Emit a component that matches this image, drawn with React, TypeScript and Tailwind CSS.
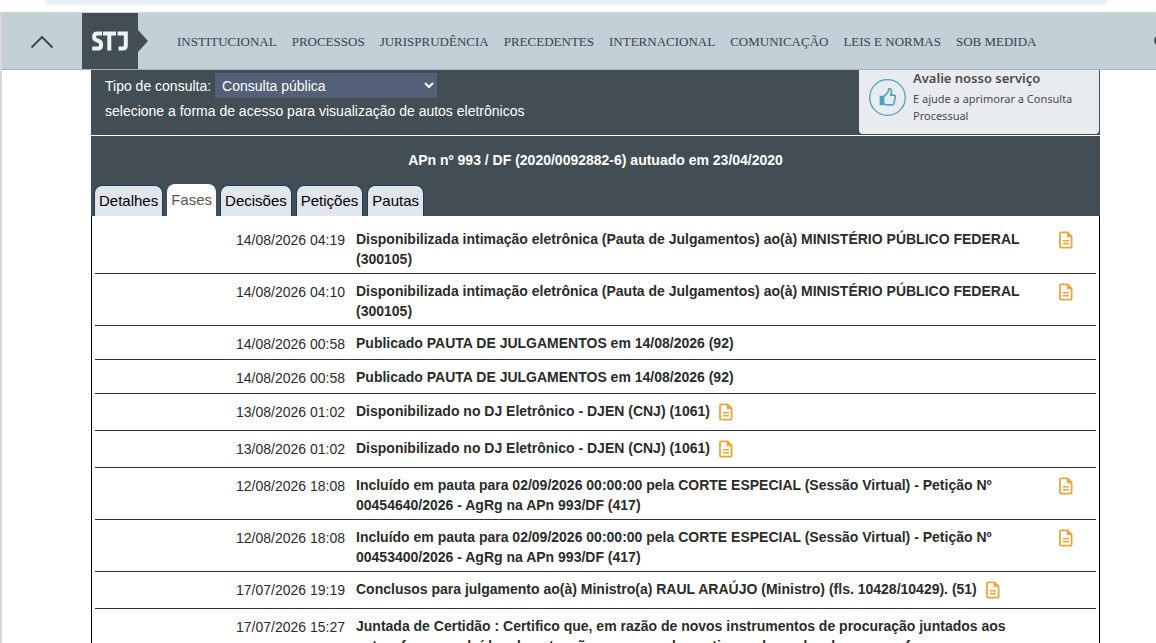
import React from "react";

type Phase = { date: string; text: string; doc?: boolean };

const menu = [
  "INSTITUCIONAL",
  "PROCESSOS",
  "JURISPRUDÊNCIA",
  "PRECEDENTES",
  "INTERNACIONAL",
  "COMUNICAÇÃO",
  "LEIS E NORMAS",
  "SOB MEDIDA",
];

const tabs = ["Detalhes", "Fases", "Decisões", "Petições", "Pautas"];

const phases: Phase[] = [
  { date: "14/08/2026 04:19", text: "Disponibilizada intimação eletrônica (Pauta de Julgamentos) ao(à) MINISTÉRIO PÚBLICO FEDERAL (300105)", doc: true },
  { date: "14/08/2026 04:10", text: "Disponibilizada intimação eletrônica (Pauta de Julgamentos) ao(à) MINISTÉRIO PÚBLICO FEDERAL (300105)", doc: true },
  { date: "14/08/2026 00:58", text: "Publicado PAUTA DE JULGAMENTOS em 14/08/2026 (92)" },
  { date: "14/08/2026 00:58", text: "Publicado PAUTA DE JULGAMENTOS em 14/08/2026 (92)" },
  { date: "13/08/2026 01:02", text: "Disponibilizado no DJ Eletrônico - DJEN (CNJ) (1061)", doc: true },
  { date: "13/08/2026 01:02", text: "Disponibilizado no DJ Eletrônico - DJEN (CNJ) (1061)", doc: true },
  { date: "12/08/2026 18:08", text: "Incluído em pauta para 02/09/2026 00:00:00 pela CORTE ESPECIAL (Sessão Virtual) - Petição Nº 00454640/2026 - AgRg na APn 993/DF (417)", doc: true },
  { date: "12/08/2026 18:08", text: "Incluído em pauta para 02/09/2026 00:00:00 pela CORTE ESPECIAL (Sessão Virtual) - Petição Nº 00453400/2026 - AgRg na APn 993/DF (417)", doc: true },
  { date: "17/07/2026 19:19", text: "Conclusos para julgamento ao(à) Ministro(a) RAUL ARAÚJO (Ministro) (fls. 10428/10429). (51)", doc: true },
  { date: "17/07/2026 15:27", text: "Juntada de Certidão : Certifico que, em razão de novos instrumentos de procuração juntados aos autos, foram excluídos da autuação os nomes dos antigos advogados, bem como foram" },
];

function DocIcon() {
  return (
    <svg className="block h-[18px] w-[14px]" viewBox="0 0 14 18" fill="none" stroke="#eaa63a" strokeWidth="1.8" strokeLinejoin="round">
      <path d="M2 1.4h6.6l4 4.1v10.1a1 1 0 0 1-1 1H2a1 1 0 0 1-1-1V2.4a1 1 0 0 1 1-1z" />
      <path d="M8.2 1.4v4.4h4.4z" fill="#eaa63a" strokeWidth="1" />
      <path d="M3.8 9.8h6.2M3.8 12.8h6.2" strokeWidth="1.4" />
    </svg>
  );
}

function SiteHeader() {
  return (
    <header className="flex h-[58px] items-stretch overflow-hidden border-y border-t-[#cbd5db] border-b-[#a3b3bb] bg-[#c3d0d7]">
      <button type="button" aria-label="Recolher" className="flex w-20 shrink-0 items-center justify-center pt-0.5">
        <svg className="h-3.5 w-6" viewBox="0 0 24 14" fill="none" stroke="#37444a" strokeWidth="1.8">
          <path d="M1.5 12.5 12 2l10.500 10.500" />
        </svg>
      </button>
      <a href="#inicio" aria-label="STJ" className="flex shrink-0 items-center">
        <span className="flex h-full w-14 items-center justify-center bg-[#424e54]">
          <svg className="h-5 w-[38px]" viewBox="0 0 38 20" fill="none" stroke="#eef2f4" strokeWidth="4">
            <path d="M11 2.500H6Q3.200 2.500 3.200 5.200v1Q3.200 8.400 5.400 9.200l2.500 1Q10 11.100 10 13.300v1.200q0 3-3 3H1.200" />
            <path d="M12 2.500h13M18.300 2.500V19.500" />
            <path d="M26.500 2.500h8.300V14.500q0 3-3 3h-4.300" />
          </svg>
        </span>
        <svg className="h-6 w-2.5" viewBox="0 0 10 24" fill="#424e54">
          <path d="M0 1l10 11L0 23z" />
        </svg>
      </a>
      <nav className="ml-[29px] flex items-center gap-[15px] whitespace-nowrap pt-px font-['Liberation_Serif',serif] text-[13px] text-[#37444a]">
        {menu.map((m) => (
          <a key={m} href="#menu">{m}</a>
        ))}
      </nav>
      <button type="button" aria-label="Buscar" className="-mr-3 ml-auto flex shrink-0 items-center">
        <svg className="h-3.5 w-3.5" viewBox="0 0 14 14" fill="none" stroke="#37444a" strokeWidth="2">
          <circle cx="6" cy="6.500" r="4.800" />
          <path d="M9.500 10l3.500 3.500" />
        </svg>
      </button>
    </header>
  );
}

function QueryBar() {
  return (
    <section className="flex h-[65px] justify-between bg-[#424e54] text-sm text-white">
      <div className="flex flex-col pl-3.5 pt-[3px]">
        <div className="flex items-center gap-1">
          <label htmlFor="tipo">Tipo de consulta:</label>
          <select id="tipo" className="h-[25px] w-[222px] bg-[#536078] pl-[3px] text-sm text-white">
            <option>Consulta pública</option>
          </select>
        </div>
        <p className="mt-[3px] leading-5">selecione a forma de acesso para visualização de autos eletrônicos</p>
      </div>
      <aside className="mb-px mr-px flex w-[240px] items-start gap-[7px] rounded-b-sm bg-[#e8ecf0] pl-2.5 font-['Noto_Sans','Open_Sans',sans-serif] text-[#4a4a4a]">
        <svg className="mt-[9px] h-[37px] w-[37px] shrink-0" viewBox="0 0 37 37" fill="none" stroke="#4fa3b3" strokeWidth="1.300">
          <circle cx="18.500" cy="18.500" r="17.800" />
          <path d="M11.300 17.500h3.400v8h-3.400z" fill="#4fa3b3" />
          <path d="M14.700 17.700l4.200-4.400.9-3.600q2.700-.2 2.700 2.600l-.8 3.800h3.200q1.600.2 1.300 1.900l-1.200 6.300q-.4 1.600-2 1.600h-4.600l-3.700-1" strokeWidth="1.600" strokeLinejoin="round" />
        </svg>
        <div>
          <h2 className="text-[13px] font-semibold leading-[17px]">Avalie nosso serviço</h2>
          <p className="mt-[3px] text-[11px] leading-[17px]">E ajude a aprimorar a Consulta Processual</p>
        </div>
      </aside>
    </section>
  );
}

function Tabs() {
  return (
    <div role="tablist" className="flex items-end gap-1 pl-[3px] text-[15px]">
      {tabs.map((t) =>
        t === "Fases" ? (
          <button key={t} type="button" role="tab" aria-selected="true" className="h-8 rounded-t-lg bg-white px-1 text-[#555555]">
            {t}
          </button>
        ) : (
          <button key={t} type="button" role="tab" aria-selected="false" className="h-[31px] rounded-t-lg border border-b-0 border-[#1e3c5c] bg-[#e0e6ec] px-1 text-black">
            {t}
          </button>
        )
      )}
    </div>
  );
}

function PhaseTable() {
  return (
    <div className="border-x border-black px-[3px] pt-1.5">
      <table className="w-full border-collapse text-sm leading-5 text-[#2b2b2b]">
        <tbody>
          {phases.map((p, i) => (
            <tr key={i} className="h-[34px] border-b border-[#333333] align-top">
              <td className="w-[250px] pt-2 text-right">{p.date}</td>
              <td className="pb-1 pl-[11px] pt-[7px]">
                <div className="flex items-start gap-[9px]">
                  <p className="max-w-[694px] font-bold">{p.text}</p>
                  {p.doc && (
                    <a href="#documento" aria-label="Documento" className="shrink-0 pb-[5px] pt-0.5">
                      <DocIcon />
                    </a>
                  )}
                </div>
              </td>
            </tr>
          ))}
        </tbody>
      </table>
    </div>
  );
}

export default function App() {
  return (
    <div className="h-screen overflow-hidden bg-white font-['Liberation_Sans',Arial,sans-serif]">
      <div className="h-3 pl-[45px] pr-12">
        <div className="h-[5px] rounded-b-lg bg-[#eceffa]" />
      </div>
      <div className="min-h-full border-l-2 border-[#d4d8da]">
        <SiteHeader />
        <main className="ml-[89px] mr-14">
          <QueryBar />
          <section className="mt-px bg-[#424e54]">
            <h1 className="pb-3.5 pt-3.5 text-center text-sm font-bold leading-5 text-white">
              APn nº 993 / DF (2020/0092882-6) autuado em 23/04/2020
            </h1>
            <Tabs />
          </section>
          <PhaseTable />
        </main>
      </div>
    </div>
  );
}
